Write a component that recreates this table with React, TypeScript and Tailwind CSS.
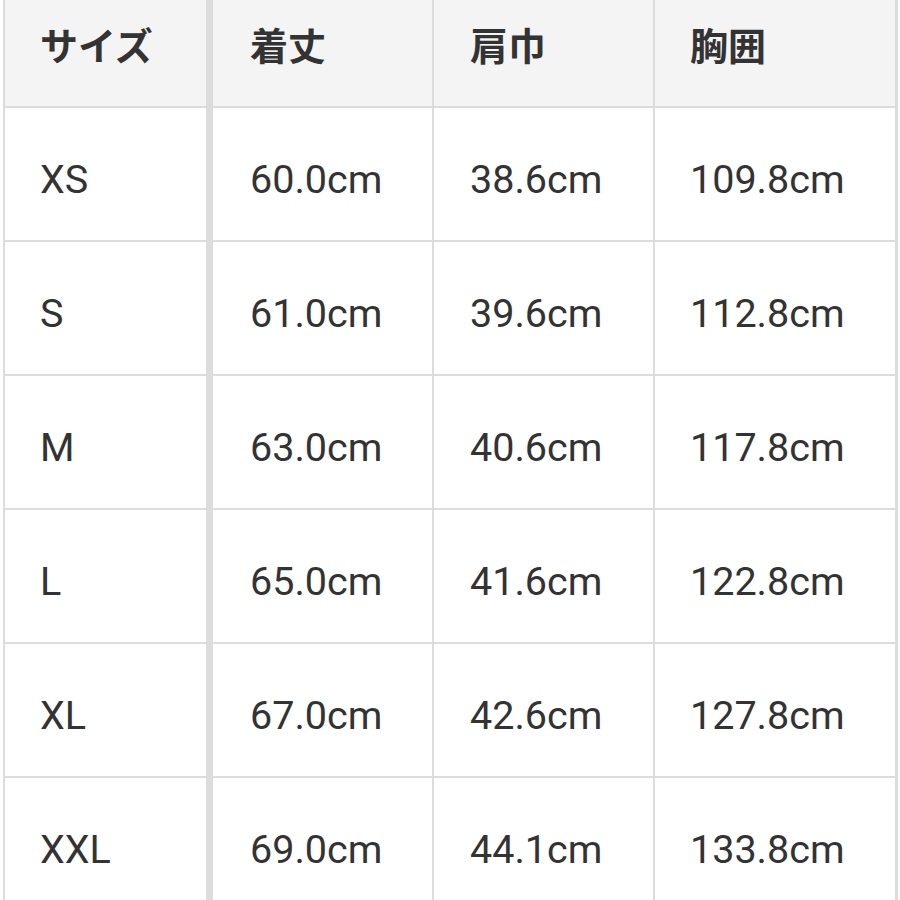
const header = ['サイズ', '着丈', '肩巾', '胸囲']

const rows = [
  ['XS', '60.0cm', '38.6cm', '109.8cm'],
  ['S', '61.0cm', '39.6cm', '112.8cm'],
  ['M', '63.0cm', '40.6cm', '117.8cm'],
  ['L', '65.0cm', '41.6cm', '122.8cm'],
  ['XL', '67.0cm', '42.6cm', '127.8cm'],
  ['XXL', '69.0cm', '44.1cm', '133.8cm'],
]

const cellWidths = [
  'w-[208px] border-r-[7px] pl-[35px]',
  'w-[221px] border-r-2 pl-[37px]',
  'w-[221px] border-r-2 pl-[36px]',
  'flex-1 pl-[35px]',
]

export default function App() {
  return (
    <div className="h-[900px] w-[900px] overflow-hidden bg-white">
      <div className="ml-[3px] w-[895px] border-l-2 border-r-[3px] border-[#dcdcdc]">
        <div className="flex h-[108px] border-b-2 border-[#dcdcdc] bg-[#f4f4f4]">
          {header.map((h, i) => (
            <div
              key={h}
              className={`${cellWidths[i]} flex items-start border-[#dcdcdc] pt-[23px] text-[38px] leading-[42px] font-bold text-[#333333] [font-family:'Noto_Sans_CJK_JP',sans-serif]`}
            >
              {h}
            </div>
          ))}
        </div>

        {rows.map((r) => (
          <div key={r[0]} className="flex h-[134px] border-b-2 border-[#dcdcdc]">
            {r.map((c, i) => (
              <div
                key={i}
                className={`${cellWidths[i]} flex items-center border-[#dcdcdc] pt-[12px] text-[39.5px] leading-none text-[#333333] [font-family:Roboto,sans-serif]`}
              >
                {c}
              </div>
            ))}
          </div>
        ))}
      </div>
    </div>
  )
}
